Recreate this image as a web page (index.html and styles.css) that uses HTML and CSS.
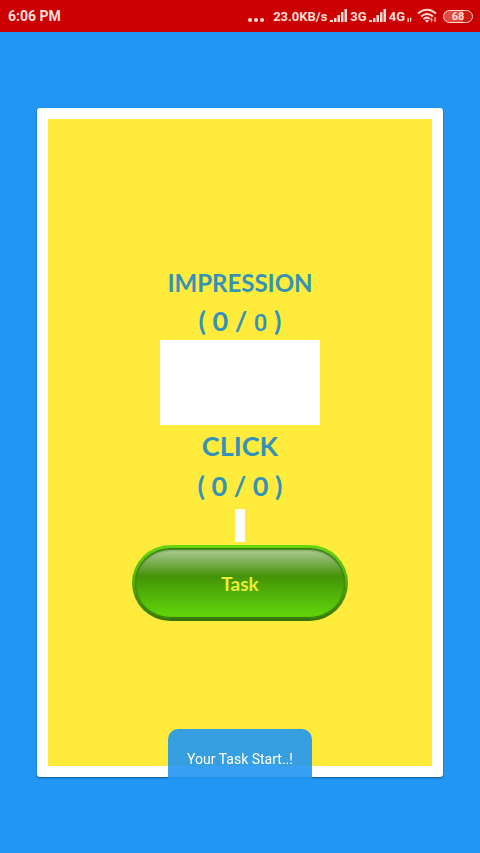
FILE: index.html
```
<!DOCTYPE html>
<html lang="en">
<head>
    <meta charset="UTF-8">
    <meta name="viewport" content="width=device-width, initial-scale=1.0">
    <title>Task</title>
    <link rel="stylesheet" href="styles.css">
</head>
<body>
    <header class="status-bar">
        <span class="time">6:06 PM</span>
        <div class="status-icons">
            <svg class="dots" width="16" height="16" viewBox="0 0 16 16">
                <circle cx="2" cy="12" r="2"/>
                <circle cx="8" cy="12" r="2"/>
                <circle cx="14" cy="12" r="2"/>
            </svg>
            <span class="speed">23.0KB/s</span>
            <svg class="signal" width="18" height="14" viewBox="0 0 18 14">
                <path d="M0 11h3v2H0zM4 9h2.500v4H4zM7.500 6H10v7H7.500zM11 3h2.500v10H11zM14.500 0H17v13h-2.500z"/>
            </svg>
            <span class="network">3G</span>
            <svg class="signal" width="18" height="14" viewBox="0 0 18 14">
                <path d="M0 11h3v2H0zM4 9h2.500v4H4zM7.500 6H10v7H7.500zM11 3h2.500v10H11zM14.500 0H17v13h-2.500z"/>
            </svg>
            <span class="network">4G</span>
            <svg class="data" width="5" height="14" viewBox="0 0 5 14">
                <path d="M.5 9h1.300v4H.5zM3 8.500h1.300v4H3z"/>
            </svg>
            <svg class="wifi" width="21" height="16" viewBox="0 0 21 16">
                <g fill="none" stroke="#ffdcd6" stroke-width="2">
                    <path d="M1 5.500Q10 -2 19 5.500"/>
                    <path d="M4 8.500Q10 3.500 16 8.500"/>
                    <path d="M6.500 11Q10 8.300 13 11"/>
                </g>
                <path d="M8 12.500Q10 11 12 12.500L10 14.800z"/>
                <path d="M14.500 14v-3M18 9v4" fill="none" stroke="#f29a92" stroke-width="1.500"/>
                <path d="M13 12l1.500-2.500L16 12zM16.500 12l1.500 2.500 1.500-2.500z" fill="#f29a92"/>
            </svg>
            <span class="battery">68</span>
        </div>
    </header>

    <main class="card">
        <h2 class="label">IMPRESSION</h2>
        <p class="count">( 0 / <span class="total">0</span> )</p>
        <div class="ad-box"></div>
        <h2 class="label label-click">CLICK</h2>
        <p class="count count-click">( 0 / 0 )</p>
        <div class="ad-strip"></div>
        <button type="button" class="task-btn">Task</button>
    </main>

    <div class="toast" role="status">Your Task Start..!</div>
</body>
</html>
```
FILE: styles.css
```
* {
    box-sizing: border-box;
}
body {
    font-family: Lato, sans-serif;
    margin: 0;
    min-height: 100vh;
    display: flex;
    flex-direction: column;
    background-color: #2196f3;
}
.status-bar {
    display: flex;
    justify-content: space-between;
    align-items: center;
    height: 32px;
    padding: 0 7px 0 8px;
    background-color: #cb0000;
    color: #ffdcd6;
    font-family: Roboto, sans-serif;
    font-size: 14px;
    font-weight: 700;
}
.status-icons {
    display: flex;
    align-items: center;
    font-size: 13px;
}
.status-icons svg {
    fill: #ffdcd6;
}
.speed {
    margin-left: 9px;
    margin-right: 3px;
}
.network {
    margin: 0 2px;
}
.wifi {
    margin: 0 5px;
}
.battery {
    width: 30px;
    height: 13px;
    border: 1px solid #ffdcd6;
    border-radius: 7px;
    background: linear-gradient(to right, #e04a40 68%, #d01810 68%);
    font-size: 11px;
    line-height: 11px;
    text-align: center;
}
.card {
    flex: 1;
    display: flex;
    flex-direction: column;
    align-items: center;
    justify-content: center;
    margin: 76px 37px;
    border: 11px solid #fff;
    border-radius: 3px;
    background-color: #ffeb3b;
    background-clip: padding-box;
    box-shadow: 0 1px 2px rgba(0, 0, 0, 0.4);
    color: #3492b8;
}
.label {
    margin: 0;
    font-size: 24px;
    font-weight: 700;
    line-height: 38px;
}
.count {
    margin: 0;
    font-size: 27px;
    font-weight: 700;
    line-height: 38px;
}
.total {
    font-family: Roboto, sans-serif;
    font-weight: 500;
    font-size: 24px;
    line-height: 24px;
}
.label-click {
    font-size: 27px;
    line-height: 42px;
}
.count-click {
    padding-bottom: 4px;
}
.ad-box {
    width: 160px;
    height: 85px;
    background-color: #fff;
}
.ad-strip {
    width: 10px;
    height: 33px;
    background-color: #fff;
}
.task-btn {
    width: 216px;
    height: 76px;
    margin-top: 3px;
    border: 3px solid transparent;
    border-radius: 38px;
    background:
        linear-gradient(#b4cf9b 0%, #83b15c 18%, #459207 40%, #4ba508 55%, #62d80c 100%) padding-box,
        linear-gradient(#66d80f 0%, #55b60d 40%, #377307 100%) border-box;
    box-shadow: inset 0 2px 2px #347609, inset 0 -1px 1px #347609;
    color: #e9ee35;
    font-family: Lato, sans-serif;
    font-size: 19px;
    font-weight: 700;
}
/* sits over the bottom edge of the card */
.toast {
    position: fixed;
    bottom: 64px;
    left: 50%;
    transform: translateX(-50%);
    width: 144px;
    height: 60px;
    border-radius: 10px;
    background-color: rgba(33, 150, 243, 0.9);
    color: #fff;
    font-family: Roboto, sans-serif;
    font-size: 14px;
    line-height: 60px;
    text-align: center;
    white-space: nowrap;
}
```
